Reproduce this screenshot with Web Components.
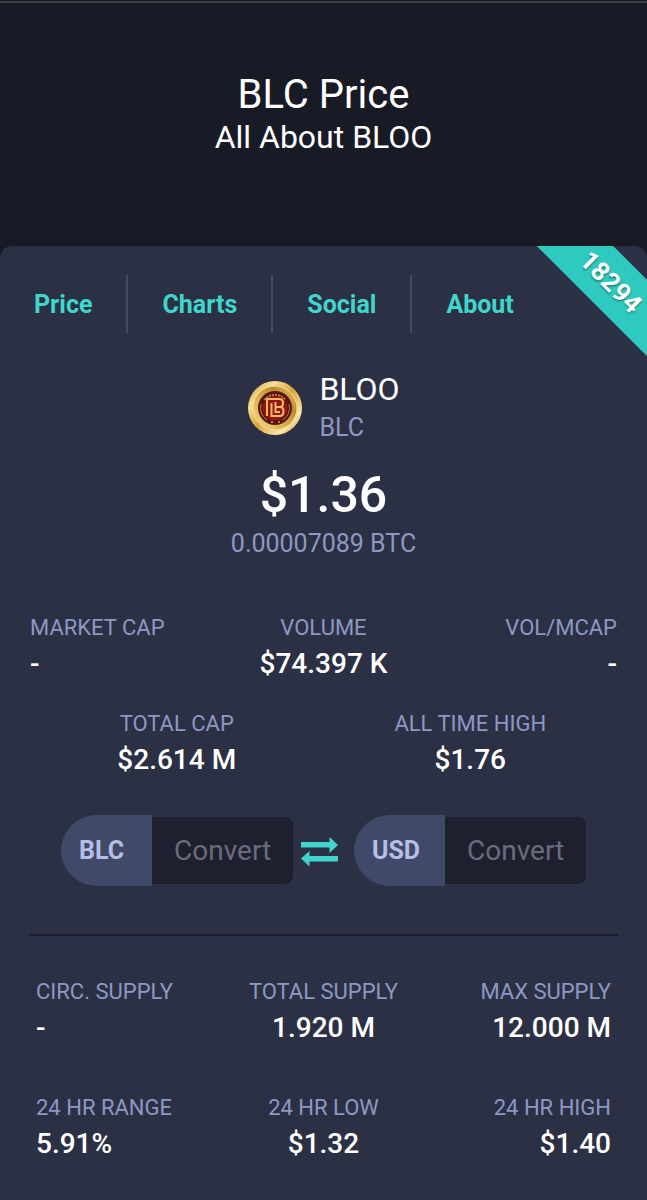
<!DOCTYPE html>
<html lang="en">
<head>
<meta charset="UTF-8">
<meta name="viewport" content="width=device-width, initial-scale=1">
<title>BLC Price</title>
<style>
  :root {
    --color-page: #181a26;
    --color-card: #2c3044;
    --color-accent: #40d6cc;
    --color-ribbon: #2ecabf;
    --color-text: #ffffff;
    --color-muted: #8d98c3;
    --color-divider: #43496a;
    --color-line: #1c1e2d;
    --color-chip: #414968;
    --color-chip-text: #b4bfe6;
    --color-field: #1e2030;
    --color-placeholder: #696c7c;
  }

  body {
    margin: 0;
    padding-top: 1px;
    background: var(--color-page);
    color: var(--color-text);
    font-family: Roboto, "Liberation Sans", sans-serif;
  }
</style>
</head>
<body>
<coin-page>
  <page-hero slot="hero">
    <span slot="title">BLC Price</span>
    <span slot="subtitle">All About BLOO</span>
  </page-hero>

  <rank-ribbon>18294</rank-ribbon>

  <section-nav>
    <a href="#price">Price</a>
    <a href="#charts">Charts</a>
    <a href="#social">Social</a>
    <a href="#about">About</a>
  </section-nav>

  <coin-summary name="BLOO" symbol="BLC" price="$1.36" btc="0.00007089 BTC"></coin-summary>

  <stat-row>
    <stat-item label="MARKET CAP" align="left">-</stat-item>
    <stat-item label="VOLUME">$74.397 K</stat-item>
    <stat-item label="VOL/MCAP" align="right">-</stat-item>
  </stat-row>
  <stat-row class="second">
    <stat-item label="TOTAL CAP">$2.614 M</stat-item>
    <stat-item label="ALL TIME HIGH">$1.76</stat-item>
  </stat-row>

  <coin-converter from="BLC" to="USD"></coin-converter>

  <stat-row class="inset supply">
    <stat-item label="CIRC. SUPPLY" align="left">-</stat-item>
    <stat-item label="TOTAL SUPPLY">1.920 M</stat-item>
    <stat-item label="MAX SUPPLY" align="right">12.000 M</stat-item>
  </stat-row>
  <stat-row class="inset range">
    <stat-item label="24 HR RANGE" align="left">5.91%</stat-item>
    <stat-item label="24 HR LOW">$1.32</stat-item>
    <stat-item label="24 HR HIGH" align="right">$1.40</stat-item>
  </stat-row>
</coin-page>

<script>
/* ── Page shell ──────────────────────────────────────── */
class CoinPage extends HTMLElement {
  connectedCallback() {
    this.attachShadow({ mode: 'open' }).innerHTML = `
      <style>
        :host {
          display: flex;
          flex-direction: column;
          box-sizing: border-box;
          min-height: calc(100vh - 1px);
          border-top: 2px solid #3c3d47;
        }
        main {
          position: relative;
          flex: 1;
          box-sizing: border-box;
          padding: 29px 0 34px;
          border-radius: 12px 12px 0 0;
          background: var(--color-card);
          overflow: hidden;
        }
        ::slotted(stat-row) { margin: 50px 30px 0; }
        ::slotted(stat-row.second) { margin-top: 24px; }
        ::slotted(stat-row.inset) { margin: 44px 36px 0; }
        ::slotted(stat-row.supply) { margin-top: 41px; }
      </style>
      <slot name="hero"></slot>
      <main><slot></slot></main>
    `;
  }
}

class PageHero extends HTMLElement {
  connectedCallback() {
    this.attachShadow({ mode: 'open' }).innerHTML = `
      <style>
        :host { display: block; padding: 70px 16px 89px; text-align: center; }
        h1, h2 { margin: 0; font-weight: 400; }
        h1 { font-size: 40px; line-height: 44px; }
        h2 { font-size: 32px; line-height: 40px; }
      </style>
      <header>
        <h1><slot name="title"></slot></h1>
        <h2><slot name="subtitle"></slot></h2>
      </header>
    `;
  }
}

/* ── Corner ribbon with the coin's rank ──────────────── */
class RankRibbon extends HTMLElement {
  connectedCallback() {
    this.attachShadow({ mode: 'open' }).innerHTML = `
      <style>
        :host {
          position: absolute;
          top: 0;
          right: 0;
          width: 110px;
          height: 110px;
          overflow: hidden;
        }
        .band {
          position: absolute;
          top: 9px;
          left: -26px;
          width: 200px;
          transform: rotate(45deg);
          background: var(--color-ribbon);
          font-size: 26px;
          font-weight: 700;
          line-height: 54px;
          text-align: center;
          text-shadow: 1px 1px 2px rgba(0, 0, 0, 0.4);
        }
      </style>
      <div class="band"><slot></slot></div>
    `;
  }
}

class SectionNav extends HTMLElement {
  connectedCallback() {
    this.attachShadow({ mode: 'open' }).innerHTML = `
      <style>
        :host { display: block; }
        nav { display: flex; }
        ::slotted(a) {
          padding: 2px 34px 0;
          border-right: 2px solid var(--color-divider);
          color: var(--color-accent);
          font-size: 25px;
          font-weight: 700;
          line-height: 56px;
          text-decoration: none;
        }
        ::slotted(a:last-child) { border-right: none; }
      </style>
      <nav><slot></slot></nav>
    `;
  }
}

/* ── Logo, name and current price ────────────────────── */
const COIN_SVG = `
  <svg width="56" height="56" viewBox="0 0 56 56" role="img" aria-label="BLOO coin">
    <defs>
      <linearGradient id="rim" x1="0" y1="0" x2="1" y2="1">
        <stop offset="0" stop-color="#c4902f"/>
        <stop offset=".25" stop-color="#f7df95"/>
        <stop offset=".5" stop-color="#d9a43c"/>
        <stop offset=".78" stop-color="#fbe9a8"/>
        <stop offset="1" stop-color="#a8701d"/>
      </linearGradient>
      <linearGradient id="face" x1="1" y1="0" x2="0" y2="1">
        <stop offset="0" stop-color="#f3d180"/>
        <stop offset=".3" stop-color="#c08a31"/>
        <stop offset=".6" stop-color="#e0b04c"/>
        <stop offset="1" stop-color="#f7dd8c"/>
      </linearGradient>
    </defs>
    <circle cx="28" cy="28" r="27" fill="url(#rim)"/>
    <circle cx="28" cy="28" r="22" fill="url(#face)" stroke="#f6dc94"/>
    <circle cx="28" cy="28" r="17" fill="#551713"/>
    <path d="M17.500 20a13.500 13.500 0 0 1 21 0" fill="none" stroke="#c98e48" stroke-width="2" stroke-dasharray="2 1"/>
    <path d="M14 24a14.500 14.500 0 0 0 6 16M42 24a14.500 14.500 0 0 1-6 16" fill="none" stroke="#b97f3d"/>
    <circle cx="28" cy="28" r="12.500" fill="#94170f"/>
    <g fill="none" stroke="#f0b968" stroke-width="2">
      <path d="M20 36V19h12.500q3.500 0 3.500 4t-3 4q3.500 0 3.500 4.500t-4 4.500H24.500V23"/>
      <path d="M28.500 22v10h4.500M28.500 27h4.500"/>
    </g>
    <circle cx="25" cy="42" r="1" fill="#e0a552"/>
    <circle cx="32" cy="42" r="1" fill="#e0a552"/>
  </svg>
`;

class CoinSummary extends HTMLElement {
  connectedCallback() {
    const get = (name) => this.getAttribute(name);
    this.attachShadow({ mode: 'open' }).innerHTML = `
      <style>
        :host { display: block; margin-top: 36px; text-align: center; }
        .coin {
          display: flex;
          align-items: center;
          justify-content: center;
          gap: 16px;
          text-align: left;
        }
        svg { display: block; }
        p { margin: 0; }
        .name { font-size: 32px; line-height: 40px; }
        .symbol, .btc { color: var(--color-muted); font-size: 25px; line-height: 38px; }
        .price { margin-top: 18px; font-size: 50px; font-weight: 500; line-height: 60px; }
      </style>
      <div class="coin">
        ${COIN_SVG}
        <div>
          <p class="name">${get('name')}</p>
          <p class="symbol">${get('symbol')}</p>
        </div>
      </div>
      <p class="price">${get('price')}</p>
      <p class="btc">${get('btc')}</p>
    `;
  }
}

/* ── Stats ───────────────────────────────────────────── */
class StatRow extends HTMLElement {
  connectedCallback() {
    this.attachShadow({ mode: 'open' }).innerHTML = `
      <style>
        :host { display: grid; grid-auto-flow: column; grid-auto-columns: 1fr; }
      </style>
      <slot></slot>
    `;
  }
}

class StatItem extends HTMLElement {
  connectedCallback() {
    this.attachShadow({ mode: 'open' }).innerHTML = `
      <style>
        :host { display: block; text-align: center; white-space: nowrap; }
        :host([align="left"]) { text-align: left; }
        :host([align="right"]) { text-align: right; }
        dl, dd { margin: 0; }
        dt { color: var(--color-muted); font-size: 22px; line-height: 30px; }
        dd { font-size: 28px; font-weight: 500; line-height: 42px; }
      </style>
      <dl>
        <dt>${this.getAttribute('label')}</dt>
        <dd><slot></slot></dd>
      </dl>
    `;
  }
}

/* ── Converter ───────────────────────────────────────── */
class CoinConverter extends HTMLElement {
  connectedCallback() {
    const field = (id, code) => `
      <div class="field">
        <label for="${id}">${code}</label>
        <input id="${id}" type="text" inputmode="decimal" placeholder="Convert">
      </div>
    `;
    this.attachShadow({ mode: 'open' }).innerHTML = `
      <style>
        :host {
          display: block;
          margin: 34px 29px 0;
          padding-bottom: 48px;
          border-bottom: 2px solid var(--color-line);
        }
        form { display: flex; align-items: center; justify-content: center; }
        .field { display: flex; align-items: center; }
        label {
          box-sizing: border-box;
          width: 91px;
          padding-left: 18px;
          border-radius: 36px 0 0 36px;
          background: var(--color-chip);
          color: var(--color-chip-text);
          font-size: 25px;
          font-weight: 700;
          line-height: 71px;
        }
        input {
          box-sizing: border-box;
          width: 141px;
          height: 67px;
          padding: 0 20px 0 22px;
          border: none;
          border-radius: 0 8px 8px 0;
          background: var(--color-field);
          color: var(--color-text);
          font: 400 28px/34px Roboto, "Liberation Sans", sans-serif;
        }
        input::placeholder { color: var(--color-placeholder); opacity: 1; }
        button {
          padding: 3px 16px 0 8px;
          border: none;
          background: none;
          color: var(--color-accent);
          cursor: pointer;
        }
        svg { display: block; }
      </style>
      <form>
        ${field('from', this.getAttribute('from'))}
        <button type="button" aria-label="Swap currencies">
          <svg width="37" height="30" viewBox="0 0 37 30" fill="currentColor">
            <path d="M0 5h28.500V0L37 8l-8.500 8v-5.500H0z"/>
            <path d="M37 19H8.500v-5L0 21.500l8.500 8v-5H37z"/>
          </svg>
        </button>
        ${field('to', this.getAttribute('to'))}
      </form>
    `;
    this.shadowRoot.querySelector('button').addEventListener('click', () => this._swap());
  }

  _swap() {
    const labels = this.shadowRoot.querySelectorAll('label');
    const from = labels[0].textContent;
    labels[0].textContent = labels[1].textContent;
    labels[1].textContent = from;
  }
}

customElements.define('coin-page', CoinPage);
customElements.define('page-hero', PageHero);
customElements.define('rank-ribbon', RankRibbon);
customElements.define('section-nav', SectionNav);
customElements.define('coin-summary', CoinSummary);
customElements.define('stat-row', StatRow);
customElements.define('stat-item', StatItem);
customElements.define('coin-converter', CoinConverter);
</script>
</body>
</html>
